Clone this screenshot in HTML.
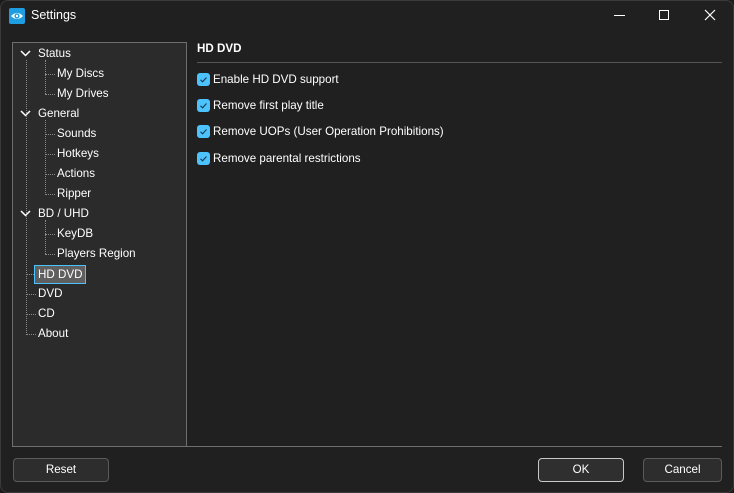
<!DOCTYPE html>
<html><head><meta charset="utf-8"><style>
*{margin:0;padding:0;box-sizing:border-box}
body{width:734px;height:493px;background:#1c1c1c;font-family:"Liberation Sans",sans-serif;font-size:11.6px;color:#fff;overflow:hidden;position:relative}
.win{position:absolute;left:0;top:0;width:734px;height:493px;background:#202020;box-shadow:inset 0 0 0 1px #3a3a3a;border-radius:8px}
.a{position:absolute;white-space:nowrap}
.tree{position:absolute;left:12px;top:42px;width:175px;height:405px;background:#2b2b2b;border:1px solid #6e6e6e}
.vl{position:absolute;border-left:1px dotted #8a8a8a;width:0}
.hl{position:absolute;border-top:1px dotted #8a8a8a;height:0}
.cb{position:absolute;left:197px;width:13px;height:13px;background:#4cc2ff;border-radius:3px}
.cb svg{position:absolute;left:0;top:0}
.btn{position:absolute;top:458px;height:24px;background:#2d2d2d;border:1px solid #5a5a5a;border-radius:4px;text-align:center;line-height:22px}
</style></head><body>
<div class="win">
<div class="a" style="left:9px;top:8px;width:16px;height:16px;background:#1e9ee0;border-radius:2px">
<svg width="16" height="16" viewBox="0 0 16 16"><path d="M2 8 Q8 2 14 8 Q8 14 2 8Z" fill="#fff"/><circle cx="8" cy="8" r="2.6" fill="#1e9ee0"/><circle cx="8" cy="8" r="1.2" fill="#fff"/></svg></div>
<div class="a" style="left:31px;top:8px;font-size:12.5px">Settings</div>
<div class="a" style="left:614px;top:15px;width:11px;height:1px;background:#fff"></div>
<div class="a" style="left:659px;top:10px;width:10px;height:10px;border:1px solid #fff"></div>
<svg class="a" style="left:704px;top:9px" width="12" height="12"><path d="M1 1L11 11M11 1L1 11" stroke="#fff" stroke-width="1.2"/></svg>

<div class="tree">
<div class="vl" style="left:13px;top:17px;height:275px"></div>
<div class="vl" style="left:32px;top:17px;height:34px"></div>
<div class="vl" style="left:32px;top:77px;height:75px"></div>
<div class="vl" style="left:32px;top:177px;height:34px"></div>
<div class="hl" style="left:32px;top:31px;width:10px"></div>
<div class="hl" style="left:32px;top:51px;width:10px"></div>
<div class="hl" style="left:32px;top:91px;width:10px"></div>
<div class="hl" style="left:32px;top:111px;width:10px"></div>
<div class="hl" style="left:32px;top:131px;width:10px"></div>
<div class="hl" style="left:32px;top:151px;width:10px"></div>
<div class="hl" style="left:32px;top:191px;width:10px"></div>
<div class="hl" style="left:32px;top:211px;width:10px"></div>
<div class="hl" style="left:13px;top:231px;width:8px"></div>
<div class="hl" style="left:13px;top:251px;width:10px"></div>
<div class="hl" style="left:13px;top:271px;width:10px"></div>
<div class="hl" style="left:13px;top:291px;width:10px"></div>
<svg class="a" style="left:7px;top:7px" width="12" height="8"><path d="M1 1L5.5 5.5L10 1" stroke="#fff" stroke-width="1.5" fill="none"/></svg>
<svg class="a" style="left:7px;top:67px" width="12" height="8"><path d="M1 1L5.5 5.5L10 1" stroke="#fff" stroke-width="1.5" fill="none"/></svg>
<svg class="a" style="left:7px;top:167px" width="12" height="8"><path d="M1 1L5.5 5.5L10 1" stroke="#fff" stroke-width="1.5" fill="none"/></svg>
<div class="a" style="left:25px;top:4px">Status</div>
<div class="a" style="left:44px;top:24px">My Discs</div>
<div class="a" style="left:44px;top:44px">My Drives</div>
<div class="a" style="left:25px;top:64px">General</div>
<div class="a" style="left:44px;top:84px">Sounds</div>
<div class="a" style="left:44px;top:104px">Hotkeys</div>
<div class="a" style="left:44px;top:124px">Actions</div>
<div class="a" style="left:44px;top:144px">Ripper</div>
<div class="a" style="left:25px;top:164px">BD / UHD</div>
<div class="a" style="left:44px;top:184px">KeyDB</div>
<div class="a" style="left:44px;top:204px">Players Region</div>
<div class="a" style="left:21px;top:222px;width:52px;height:19px;background:#5f5f5f;border:1px solid #4cc2ff;padding:2px 0 0 3px">HD DVD</div>
<div class="a" style="left:25px;top:244px">DVD</div>
<div class="a" style="left:25px;top:264px">CD</div>
<div class="a" style="left:25px;top:284px">About</div>
</div>

<div class="a" style="left:197px;top:42px;font-weight:bold">HD DVD</div>
<div class="a" style="left:197px;top:62px;width:525px;height:1px;background:#555"></div>
<div class="cb" style="top:73px"><svg width="13" height="13"><path d="M3.5 6.8L5.6 8.8L9.5 4.5" stroke="#1a3a4a" stroke-width="1.1" fill="none"/></svg></div>
<div class="a" style="left:213px;top:73px">Enable HD DVD support</div>
<div class="cb" style="top:99px"><svg width="13" height="13"><path d="M3.5 6.8L5.6 8.8L9.5 4.5" stroke="#1a3a4a" stroke-width="1.1" fill="none"/></svg></div>
<div class="a" style="left:213px;top:99px">Remove first play title</div>
<div class="cb" style="top:125px"><svg width="13" height="13"><path d="M3.5 6.8L5.6 8.8L9.5 4.5" stroke="#1a3a4a" stroke-width="1.1" fill="none"/></svg></div>
<div class="a" style="left:213px;top:125px">Remove UOPs (User Operation Prohibitions)</div>
<div class="cb" style="top:152px"><svg width="13" height="13"><path d="M3.5 6.8L5.6 8.8L9.5 4.5" stroke="#1a3a4a" stroke-width="1.1" fill="none"/></svg></div>
<div class="a" style="left:213px;top:152px">Remove parental restrictions</div>

<div class="a" style="left:186px;top:446px;width:536px;height:1px;background:#6e6e6e"></div>
<div class="btn" style="left:13px;width:96px">Reset</div>
<div class="btn" style="left:538px;width:86px;border-color:#c8c8c8;background:#2f2f2f">OK</div>
<div class="btn" style="left:643px;width:79px">Cancel</div>
</div>
</body></html>
